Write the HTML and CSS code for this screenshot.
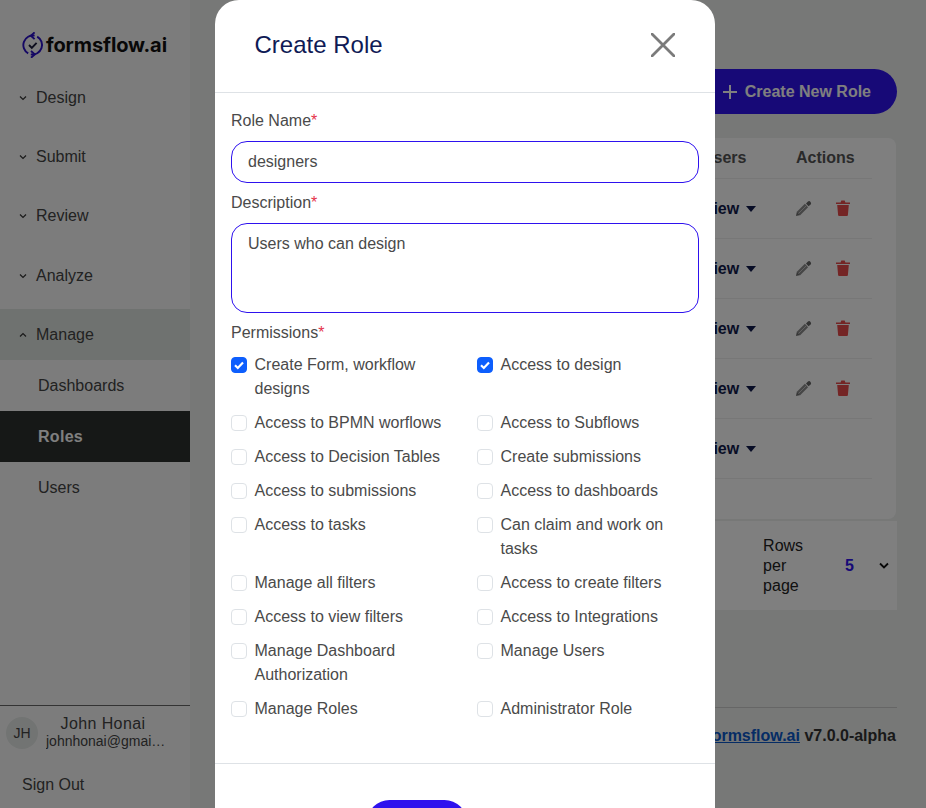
FILE: index.html
```html
<!DOCTYPE html>
<html lang="en">
<head>
<meta charset="utf-8">
<title>Roles</title>
<link rel="stylesheet" href="styles.css">
</head>
<body>
<svg class="defs" width="0" height="0" aria-hidden="true">
  <symbol id="pencil" viewBox="0 0 17 17">
    <path d="M1 16l.9-4.600L5.600 15z" fill="#707070"/>
    <path d="M3.500 13.500l8-8" stroke="#8c8c8c" stroke-width="4.600"/>
    <path d="M3.500 13.500l8-8" stroke="#c4c4c4" stroke-width="1"/>
    <path d="M11 3.500l1.700-1.700a2 2 0 0 1 2.800 0l-.3 0a2 2 0 0 1 .5 2.800L13.500 6.300z" fill="#666"/>
  </symbol>
  <symbol id="trash" viewBox="0 0 14 16">
    <path d="M0 2.500h4.600L5.300.500h3.400l.7 2H14v1.500H0z" fill="#e84a4a"/>
    <path d="M1.200 5h11.600l-.9 10a1 1 0 0 1-1 1H3.100a1 1 0 0 1-1-1z" fill="#e84a4a"/>
  </symbol>
  <symbol id="chev-down" viewBox="0 0 8 6">
    <path d="M1 1.500l3 3 3-3" fill="none" stroke="#333" stroke-width="1.200"/>
  </symbol>
  <symbol id="tick" viewBox="0 0 16 16">
    <path d="M4 8.300l2.800 2.700L12 5.600" fill="none" stroke="#fff" stroke-width="2.200"/>
  </symbol>
</svg>
<div class="app">
  <aside class="sidebar">
    <div class="logo">
      <svg class="logo-icon" viewBox="0 0 22 26" width="22" height="26">
        <g fill="none" stroke="#2a10c8" stroke-width="1.900">
          <path d="M12.600 3.600A9.600 9.600 0 0 0 6.200 21.400"/>
          <path d="M8.800 22.400A9.600 9.600 0 0 0 15.200 4.600"/>
          <path d="M12.600.4L8.900 3.700l3.700 3.400"/>
          <path d="M9 19L12.800 22.400 9 25.700"/>
        </g>
        <path d="M7 13l2.800 2.800 4.800-5" fill="none" stroke="#1a1a3a" stroke-width="1.900"/>
      </svg>
      <span class="logo-text">formsflow.ai</span>
    </div>
    <nav class="nav">
      <div class="nav-item"><svg class="chev"><use href="#chev-down"/></svg>Design</div>
      <div class="nav-item"><svg class="chev"><use href="#chev-down"/></svg>Submit</div>
      <div class="nav-item"><svg class="chev"><use href="#chev-down"/></svg>Review</div>
      <div class="nav-item"><svg class="chev"><use href="#chev-down"/></svg>Analyze</div>
      <div class="nav-item nav-open"><svg class="chev chev-up"><use href="#chev-down"/></svg>Manage</div>
      <div class="sub-item">Dashboards</div>
      <div class="sub-item sub-active">Roles</div>
      <div class="sub-item">Users</div>
    </nav>
    <div class="user">
      <div class="user-row">
        <div class="avatar">JH</div>
        <div class="user-info">
          <div class="user-name">John Honai</div>
          <div class="user-mail">johnhonai@gmail.com</div>
        </div>
      </div>
      <div class="signout">Sign Out</div>
    </div>
  </aside>
  <main class="main">
    <div class="toolbar">
      <button class="create-btn"><svg class="plus" viewBox="0 0 14 14" width="14" height="14"><path d="M7 0v14M0 7h14" stroke="#fff" stroke-width="2"/></svg>Create New Role</button>
    </div>
    <section class="card">
      <div class="thead"><span class="col-users">Users</span><span class="col-actions">Actions</span></div>
      <div class="trow"><span class="view">View <i class="caret"></i></span><span class="acts"><svg class="ic-pencil"><use href="#pencil"/></svg><svg class="ic-trash"><use href="#trash"/></svg></span></div>
      <div class="trow"><span class="view">View <i class="caret"></i></span><span class="acts"><svg class="ic-pencil"><use href="#pencil"/></svg><svg class="ic-trash"><use href="#trash"/></svg></span></div>
      <div class="trow"><span class="view">View <i class="caret"></i></span><span class="acts"><svg class="ic-pencil"><use href="#pencil"/></svg><svg class="ic-trash"><use href="#trash"/></svg></span></div>
      <div class="trow"><span class="view">View <i class="caret"></i></span><span class="acts"><svg class="ic-pencil"><use href="#pencil"/></svg><svg class="ic-trash"><use href="#trash"/></svg></span></div>
      <div class="trow"><span class="view">View <i class="caret"></i></span></div>
    </section>
    <section class="pager">
      <span class="rows-label">Rows per page</span>
      <span class="rows-value">5</span>
      <svg class="rows-chev" viewBox="0 0 10 7" width="10" height="7"><path d="M1 1.500l4 4 4-4" fill="none" stroke="#111" stroke-width="1.800"/></svg>
    </section>
    <footer class="foot"><a class="foot-link">formsflow.ai</a> v7.0.0-alpha</footer>
  </main>
</div>
<div class="backdrop"></div>
<div class="modal">
  <header class="modal-head">
    <h1 class="modal-title">Create Role</h1>
    <svg class="close" viewBox="0 0 24 24" width="24" height="24"><path d="M1 1l22 22M23 1L1 23" stroke="#7b7b7b" stroke-width="2.800" stroke-linecap="round"/></svg>
  </header>
  <div class="modal-body">
    <label class="field-label">Role Name<span class="req">*</span></label>
    <div class="input input-line">designers</div>
    <label class="field-label">Description<span class="req">*</span></label>
    <div class="input input-area">Users who can design</div>
    <label class="field-label perm-label">Permissions<span class="req">*</span></label>
    <div class="perms">
      <div class="perm"><span class="box box-on"><svg class="tick"><use href="#tick"/></svg></span><span>Create Form, workflow designs</span></div>
      <div class="perm"><span class="box box-on"><svg class="tick"><use href="#tick"/></svg></span><span>Access to design</span></div>
      <div class="perm"><span class="box"></span><span>Access to BPMN worflows</span></div>
      <div class="perm"><span class="box"></span><span>Access to Subflows</span></div>
      <div class="perm"><span class="box"></span><span>Access to Decision Tables</span></div>
      <div class="perm"><span class="box"></span><span>Create submissions</span></div>
      <div class="perm"><span class="box"></span><span>Access to submissions</span></div>
      <div class="perm"><span class="box"></span><span>Access to dashboards</span></div>
      <div class="perm"><span class="box"></span><span>Access to tasks</span></div>
      <div class="perm"><span class="box"></span><span>Can claim and work on tasks</span></div>
      <div class="perm"><span class="box"></span><span>Manage all filters</span></div>
      <div class="perm"><span class="box"></span><span>Access to create filters</span></div>
      <div class="perm"><span class="box"></span><span>Access to view filters</span></div>
      <div class="perm"><span class="box"></span><span>Access to Integrations</span></div>
      <div class="perm"><span class="box"></span><span>Manage Dashboard Authorization</span></div>
      <div class="perm"><span class="box"></span><span>Manage Users</span></div>
      <div class="perm"><span class="box"></span><span>Manage Roles</span></div>
      <div class="perm"><span class="box"></span><span>Administrator Role</span></div>
    </div>
  </div>
  <footer class="modal-foot"><button class="save-btn" aria-label="Save"></button></footer>
</div>
</body>
</html>
```
FILE: styles.css
```css
* { box-sizing: border-box; }
html, body { margin: 0; height: 808px; overflow: hidden; }
body { font-family: "Liberation Sans", Arial, sans-serif; font-size: 16px; color: #333; position: relative; background: #eef1ef; }
.defs { position: absolute; }
.app { display: flex; height: 808px; }

.sidebar { width: 190px; flex: none; background: #f9f9f9; display: flex; flex-direction: column; }
.logo { display: flex; align-items: center; gap: 2px; padding: 22px 0 0 22px; height: 68px; }
.logo-icon { flex: none; }
.logo-text { font-family: Inter, sans-serif; font-weight: 700; font-size: 20px; color: #111; letter-spacing: -0.1px; }
.nav { display: flex; flex-direction: column; }
.nav-item { display: flex; align-items: center; height: 59.3px; padding-left: 19px; gap: 9px; color: #444; }
.chev { width: 8px; height: 6px; }
.chev-up { transform: rotate(180deg); }
.nav-open { background: #dfe4e1; height: 51px; margin-top: 4px; }
.sub-item { height: 51px; display: flex; align-items: center; padding-left: 38px; color: #444; }
.sub-active { background: #2c302e; color: #fff; font-weight: 700; letter-spacing: 0.3px; }
.user { margin-top: auto; border-top: 1px solid #666; }
.user-row { display: flex; align-items: center; padding: 9px 0 0 6px; gap: 8px; }
.avatar { width: 32px; height: 32px; border-radius: 50%; background: #e4e8e6; display: flex; align-items: center; justify-content: center; font-size: 14px; color: #444; flex: none; }
.user-info { width: 120px; text-align: center; }
.user-name { font-size: 16px; line-height: 18px; color: #444; letter-spacing: 0.4px; padding-right: 6px; }
.user-mail { font-size: 14px; line-height: 17px; color: #444; white-space: nowrap; overflow: hidden; text-overflow: ellipsis; }
.signout { padding: 26px 0 0 22px; color: #444; line-height: 18px; height: 58px; }

.main { flex: 1; position: relative; padding: 69px 29px 0 0; display: flex; flex-direction: column; align-items: flex-end; }
.toolbar { display: flex; justify-content: flex-end; width: 100%; }
.create-btn { height: 45px; width: 300px; border: 0; border-radius: 23px; background: #2e12ee; color: #fff; font: 700 16px "Liberation Sans", Arial, sans-serif; display: flex; align-items: center; justify-content: flex-end; gap: 8px; padding: 0 26px 0 0; }
.plus { flex: none; }
.card { width: 500px; height: 381px; margin-top: 24px; margin-right: 1px; background: #fff; border-radius: 8px; padding-right: 24px; }
.thead { height: 41px; border-bottom: 1px solid #eee; position: relative; font-weight: 700; color: #555; }
.col-users { position: absolute; left: 306px; top: 11px; }
.col-actions { position: absolute; left: 400px; top: 11px; }
.trow { height: 60px; border-bottom: 1px solid #eee; position: relative; font-weight: 700; color: #111a4d; }
.view { position: absolute; left: 307px; top: 21px; display: flex; align-items: center; gap: 7px; }
.caret { width: 0; height: 0; border: 5.5px solid transparent; border-top: 6px solid #111a4d; border-bottom: 0; }
.acts { position: absolute; left: 399px; top: 21px; display: flex; gap: 24px; }
.ic-pencil { width: 17px; height: 17px; }
.ic-trash { width: 14px; height: 16px; }
.pager { width: 500px; height: 89px; margin-top: 2px; background: #fff; display: flex; align-items: center; justify-content: flex-end; padding-right: 8px; }
.rows-label { width: 50px; line-height: 20px; color: #222; margin-right: 32px; }
.rows-value { font-weight: 700; color: #2e12ee; margin-right: 25px; }
.foot { width: 500px; margin-top: 97px; border-top: 1px solid #ccc; text-align: right; font-weight: 700; color: #333; padding: 19px 1px 0 0; }
.foot-link { color: #0a58ca; text-decoration: underline; }

.backdrop { position: absolute; inset: 0; background: rgba(0, 0, 0, 0.5); }
.modal { position: absolute; left: 215px; top: 0; width: 500px; height: 808px; background: #fff; border-radius: 24px 24px 0 0; overflow: hidden; }
.modal-head { height: 93px; border-bottom: 1px solid #dee2e6; display: flex; align-items: center; justify-content: space-between; padding: 0 40px 4px 39.5px; }
.modal-title { margin: 0; font-size: 24px; font-weight: 400; color: #0f1a55; line-height: 29px; }
.close { margin-top: 2px; }
.modal-body { padding: 0 16px; height: 670px; }
.field-label { display: block; color: #4a4a4a; line-height: 20px; }
.req { color: #e5344a; }
.modal-body > .field-label:first-child { padding-top: 18px; height: 48px; }
.input { border: 1px solid #2e12ee; border-radius: 16px; width: 468px; padding-left: 16px; color: #4a4a4a; }
.input-line { height: 42px; line-height: 40px; margin-bottom: 10px; }
.input-area { height: 90px; line-height: 20px; padding-top: 10px; margin-top: 10px; margin-bottom: 10px; }
.perm-label { margin-bottom: 10px; }
.perms { display: grid; grid-template-columns: 246px 222px; row-gap: 10px; }
.perm { display: flex; gap: 7.5px; line-height: 24px; color: #4a4a4a; padding-right: 20px; }
.box { flex: none; width: 16px; height: 16px; margin-top: 4px; border: 1px solid #dee2e6; border-radius: 4px; background: #fff; }
.box-on { background: #0d5efd; border-color: #0d5efd; }
.tick { display: block; width: 16px; height: 16px; margin: -1px; }
.modal-foot { border-top: 1px solid #dee2e6; display: flex; padding: 36px 0 0 152px; }
.save-btn { width: 100px; height: 45px; border: 0; border-radius: 23px; background: #2e12ee; }
```
